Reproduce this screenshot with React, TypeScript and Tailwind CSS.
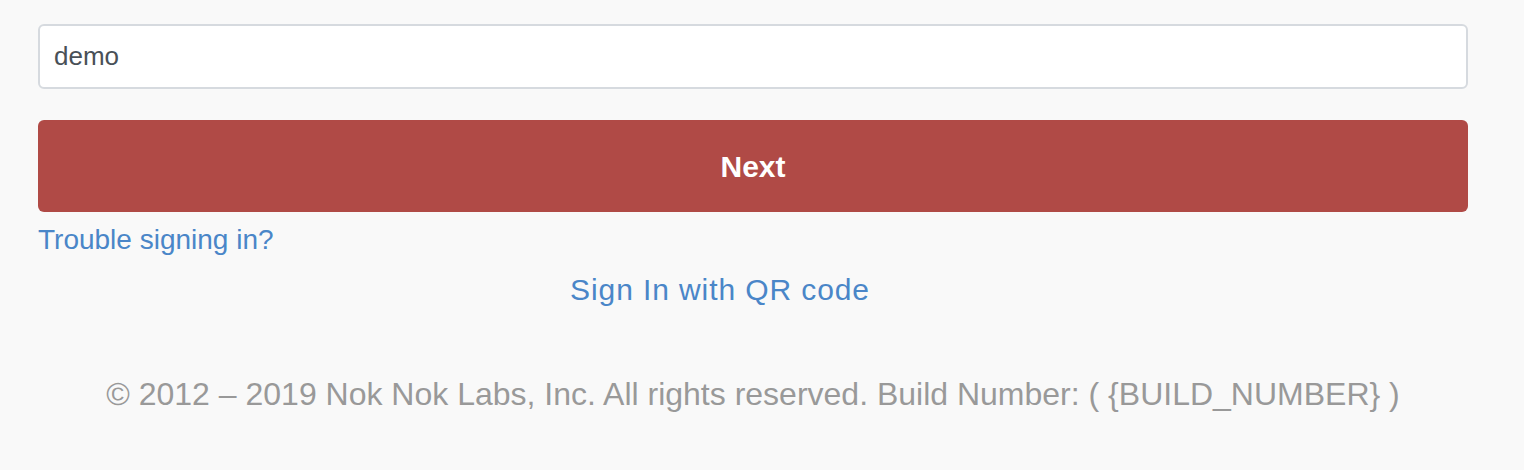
import React from "react";

export default function App() {
  return (
    <div className="w-[1524px] h-[470px] bg-[#f9f9f9] overflow-hidden" style={{ fontFamily: '"Liberation Sans", Arial, sans-serif' }}>
      <div className="ml-[38px] w-[1430px] pt-[24px] flex flex-col">
        <input
          defaultValue="demo"
          className="h-[65px] w-full rounded-[6px] border-2 border-[#d6dadf] bg-white px-[14px] text-[26px] text-[#495057] outline-none"
          style={{ fontFamily: '"Liberation Sans", Arial, sans-serif' }}
        />
        <button
          className="mt-[31px] h-[92px] w-full rounded-[6px] bg-[#b04a46] text-[30px] font-bold text-white"
          style={{ fontFamily: '"Liberation Sans", Arial, sans-serif' }}
        >
          Next
        </button>
        <a className="mt-[7px] self-start text-[28px] leading-[42px] text-[#4a86c8]">Trouble signing in?</a>
        <div className="mt-[6px] flex justify-center pr-[66px]">
          <a className="text-[30px] leading-[45px] tracking-[0.9px] text-[#4a86c8]">Sign In with QR code</a>
        </div>
        <div className="mt-[58px] text-center text-[32px] leading-[48px] text-[#999999]">
          © 2012 – 2019 Nok Nok Labs, Inc. All rights reserved. Build Number: ( {"{BUILD_NUMBER}"} )
        </div>
      </div>
    </div>
  );
}
